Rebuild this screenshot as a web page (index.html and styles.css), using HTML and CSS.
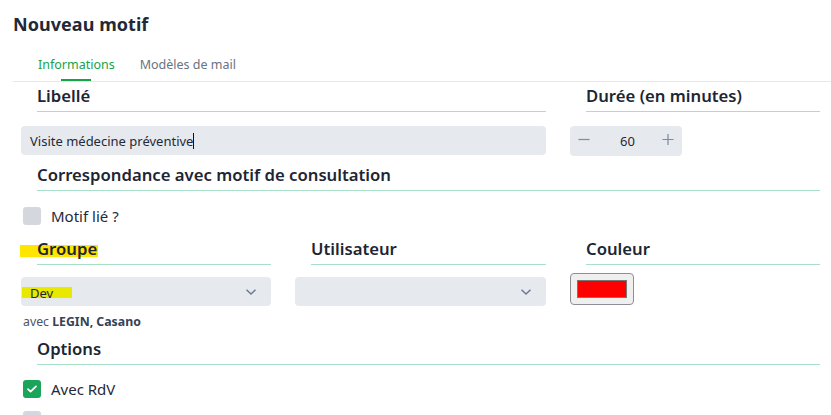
FILE: index.html
```html
<!DOCTYPE html>
<html lang="fr">
<head>
<meta charset="utf-8">
<title>Nouveau motif</title>
<link rel="stylesheet" href="styles.css">
</head>
<body>
<div class="page">
  <h1 class="title">Nouveau motif</h1>
  <div class="tabs">
    <div class="tab active">Informations</div>
    <div class="tab">Modèles de mail</div>
  </div>
  <div class="form">
    <div class="field span2">
      <div class="heading">Libellé</div>
      <div class="input text">Visite médecine préventive<span class="caret"></span></div>
    </div>
    <div class="field">
      <div class="heading">Durée (en minutes)</div>
      <div class="stepper">
        <svg class="step" width="12" height="12" viewBox="0 0 12 12"><path d="M0.5 6.5H11.5" stroke="#7d8aa0" stroke-width="1.2"/></svg>
        <span class="num">60</span>
        <svg class="step" width="12" height="12" viewBox="0 0 12 12"><path d="M0.5 6.5H11.5M6 1V12" stroke="#7d8aa0" stroke-width="1.2"/></svg>
      </div>
    </div>

    <div class="field span3 row">
      <div class="heading">Correspondance avec motif de consultation</div>
      <label class="check"><span class="box"></span>Motif lié ?</label>
    </div>

    <div class="field row2">
      <div class="heading"><span class="hl-groupe"></span><span class="htext">Groupe</span></div>
      <div class="input select"><span class="hl-text">Dev</span>
        <svg class="chev" width="12" height="8" viewBox="0 0 12 8"><path d="M1.5 1.8 6 6 10.5 1.8" fill="none" stroke="#6b7a90" stroke-width="1.5"/></svg>
      </div>
      <div class="avec">avec <b>LEGIN, Casano</b></div>
    </div>
    <div class="field row2">
      <div class="heading">Utilisateur</div>
      <div class="input select">
        <svg class="chev" width="12" height="8" viewBox="0 0 12 8"><path d="M1.5 1.8 6 6 10.5 1.8" fill="none" stroke="#6b7a90" stroke-width="1.5"/></svg>
      </div>
    </div>
    <div class="field row2">
      <div class="heading">Couleur</div>
      <div class="color"><span class="swatch"></span></div>
    </div>

    <div class="field span3">
      <div class="heading opt">Options</div>
      <label class="check first"><span class="box on"><svg width="12" height="10" viewBox="0 0 12 10"><path d="M2 5.2 4.6 7.6 10 2.4" fill="none" stroke="#fff" stroke-width="1.8" stroke-linecap="round" stroke-linejoin="round"/></svg></span>Avec RdV</label>
      <label class="check"><span class="box"></span></label>
    </div>
  </div>
</div>
</body>
</html>
```

FILE: styles.css
```css
* { box-sizing: border-box; }
html, body { margin: 0; padding: 0; background: #fff; }
body {
  font-family: "Noto Sans", "Open Sans", sans-serif;
  color: #1f2937;
  width: 831px;
  height: 415px;
  overflow: hidden;
}
.page { padding-top: 12px; }
.title {
  margin: 0 0 0 13px;
  font-size: 18px;
  line-height: 24px;
  font-weight: 700;
  color: #1f2937;
  letter-spacing: 0.05px;
}
.tabs {
  margin: 14px 0 0 13px;
  padding-left: 25px;
  display: flex;
  gap: 25px;
  border-bottom: 1px solid #e6e8eb;
  height: 32px;
}
.tab {
  font-size: 12.5px;
  line-height: 18px;
  padding-top: 6px;
  color: #6b7280;
  position: relative;
}
.tab.active { color: #16a34a; }
.tab.active::after {
  content: "";
  position: absolute;
  left: 23px;
  width: 30px;
  bottom: 0;
  height: 2px;
  background: #16a34a;
}
.form {
  margin-left: 21px;
  width: 799px;
  display: grid;
  grid-template-columns: 250px 251px 250px;
  column-gap: 24px;
  padding-top: 3px;
}
.field { display: flex; flex-direction: column; align-items: flex-start; }
.span2 { grid-column: span 2; }
.span3 { grid-column: span 3; }
.heading {
  align-self: stretch;
  margin-left: 16px;
  font-size: 16.7px;
  font-weight: 600;
  line-height: 22px;
  padding-bottom: 4px;
  border-bottom: 1px solid #a8dfc8;
  color: #1e2533;
  position: relative;
  margin-bottom: 14px;
}
.row .heading { margin-top: 8px; margin-bottom: 16px; }
.row2 .heading { margin-bottom: 12px; }
.htext { position: relative; }
.hl-groupe {
  position: absolute;
  left: -17px;
  top: 7px;
  width: 78px;
  height: 12px;
  background: #ffe600;
}
.input {
  align-self: stretch;
  height: 29px;
  background: #e6e9ee;
  border-radius: 4px;
  font-size: 13px;
  color: #1f2937;
  display: flex;
  align-items: center;
  padding-left: 9px;
  position: relative;
}
.caret {
  display: inline-block;
  width: 1px;
  height: 16px;
  background: #111;
}
.select { padding-right: 14px; }
.chev { margin-left: auto; margin-top: 1px; }
.hl-text {
  background: #e8e800;
  margin-left: -8px;
  padding: 1px 19px 0 8px;
  line-height: 11px;
  height: 11px;
  display: inline-flex;
  align-items: center;
  margin-top: 2px;
}
.stepper {
  width: 112px;
  height: 30px;
  background: #e6e9ee;
  border-radius: 4px;
  display: flex;
  align-items: center;
  justify-content: space-between;
  padding: 0 8px 0 8px;
  font-size: 13px;
  color: #1f2937;
}
.step { margin-top: -4px; }
.num { padding-left: 3px; }
.check {
  display: flex;
  align-items: center;
  gap: 10px;
  font-size: 15px;
  color: #1f2937;
  margin-left: 2px;
  height: 18px;
  margin-bottom: 13px;
}
.check.first { margin-top: 1px; }
.box {
  width: 18px;
  height: 18px;
  border-radius: 3px;
  background: #d4d8de;
  display: flex;
  align-items: center;
  justify-content: center;
  flex: none;
}
.box.on { background: #1aa55a; }
.color {
  margin-top: -4px;
  width: 64px;
  height: 32px;
  border: 1px solid #8e8e99;
  border-radius: 4px;
  background: #efefef;
  padding: 6px;
}
.swatch {
  display: block;
  width: 100%;
  height: 100%;
  background: #ff0000;
  border: 1px solid #777;
}
.avec {
  margin-left: 2px;
  margin-top: 9px;
  font-size: 12.3px;
  line-height: 14px;
  color: #4b5563;
  margin-bottom: 9px;
}
.avec b { font-weight: 700; color: #374151; }
```
